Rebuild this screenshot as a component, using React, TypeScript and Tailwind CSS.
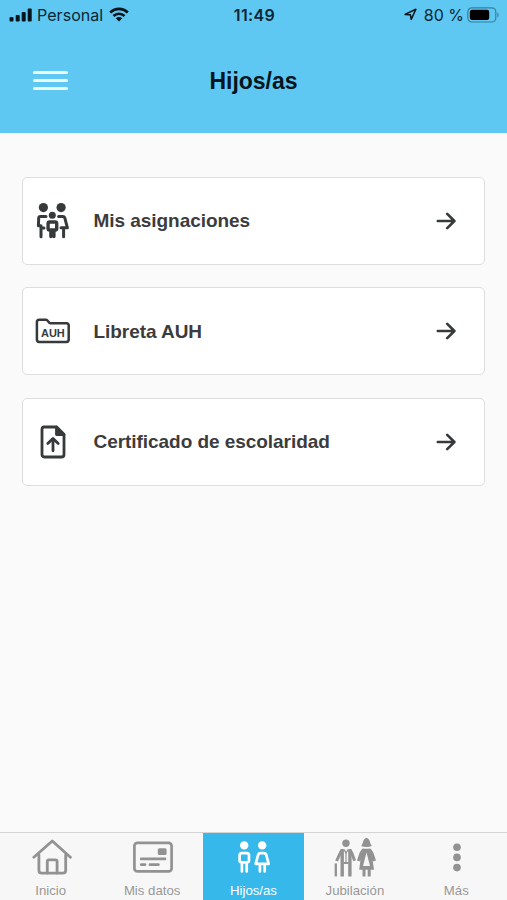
import type { ReactNode } from "react";
import clsx from "clsx";

function SignalIcon() {
  return (
    <svg width="24" height="14" viewBox="0 0 24 14" fill="#06141b">
      <rect x="0.5" y="9" width="4" height="4.5" rx="1" />
      <rect x="6.7" y="7" width="4" height="6.5" rx="1" />
      <rect x="12.7" y="4" width="4" height="9.5" rx="1" />
      <rect x="18.7" y="0.5" width="4" height="13" rx="1" />
    </svg>
  );
}

function WifiIcon() {
  return (
    <svg width="20" height="15" viewBox="0 0 20 15" fill="none" stroke="#06141b" strokeWidth="2.7">
      <path d="M1.2 5.4C6.2.8 13.8.8 18.8 5.4" />
      <path d="M4.5 8.9C7.7 6 12.3 6 15.5 8.9" />
      <path d="M10 14.5 6.8 11.2C8.6 9.6 11.4 9.6 13.2 11.2Z" fill="#06141b" stroke="none" />
    </svg>
  );
}

function LocationIcon() {
  return (
    <svg width="13" height="13" viewBox="0 0 13 13" fill="none" stroke="#06141b" strokeWidth="1.5" strokeLinejoin="round">
      <path d="M1 6.4 11.9 1.2 7.2 11.4 6.4 6.8Z" />
    </svg>
  );
}

function BatteryIcon() {
  return (
    <svg width="33" height="16" viewBox="0 0 33 16">
      <rect x="0.8" y="0.8" width="28" height="14.2" rx="4" fill="none" stroke="#3a7f9e" strokeWidth="1.2" />
      <rect x="2.8" y="2.8" width="19.4" height="10.2" rx="2.2" fill="#000" />
      <path d="M30.4 5.5c1.6.6 1.6 4.4 0 5Z" fill="#3a7f9e" />
    </svg>
  );
}

function FamilyIcon() {
  return (
    <svg width="34" height="37" viewBox="0 0 34 37" fill="none" stroke="#363a3b" strokeWidth="3" strokeLinecap="round" strokeLinejoin="round">
      <g fill="#363a3b" stroke="none">
        <circle cx="7.4" cy="5.6" r="4.6" />
        <circle cx="25.1" cy="5.6" r="4.6" />
        <circle cx="16.3" cy="13.2" r="3.5" />
      </g>
      <path d="M10 14.4H4.4Q2.8 14.4 2.7 16L2.4 23.8H5V34.8M5 26H8" />
      <path d="M22.6 14.4H26.8Q28.3 14.4 28.8 15.8L31.4 25.8H25M27.6 26V34.8" />
      <rect x="12.1" y="20" width="8.6" height="8" rx="1.5" strokeWidth="3.4" />
      <path d="M14.9 28.8V34.6M17.9 28.8V34.6" strokeWidth="3.4" />
    </svg>
  );
}

function FolderIcon() {
  return (
    <svg width="36" height="26" viewBox="0 0 36 26">
      <path
        d="M4.2 1.7H10.7Q11.7 1.7 12.4 2.5L14.2 4.6Q14.8 5.2 15.8 5.2H31.4Q33.7 5.2 33.7 7.5V21.6Q33.7 24 31.4 24H4.2Q1.9 24 1.9 21.6V4Q1.9 1.7 4.2 1.7Z"
        fill="none"
        stroke="#363a3b"
        strokeWidth="2.5"
      />
      <text x="17.9" y="18.6" textAnchor="middle" fontFamily="Liberation Sans, sans-serif" fontWeight="700" fontSize="11" fill="#363a3b">
        AUH
      </text>
    </svg>
  );
}

function UploadIcon() {
  return (
    <svg width="26" height="34" viewBox="0 0 26 34" fill="none" stroke="#363a3b" strokeWidth="2.8" strokeLinecap="round" strokeLinejoin="round">
      <path d="M4 2H16.5L24 9.5V29.5Q24 32 21.5 32H4.2Q2 32 2 29.5V4.2Q2 2 4 2Z" />
      <path d="M16.5 2V9.5H24Z" fill="#363a3b" />
      <path d="M13 25.8V14M7.8 18.6 13 13.4 18.2 18.6" />
    </svg>
  );
}

function ArrowIcon() {
  return (
    <svg width="20" height="18" viewBox="0 0 20 18" fill="none" stroke="#363a3b" strokeWidth="2.6" strokeLinecap="round" strokeLinejoin="round">
      <path d="M1.8 9H18.2M11.2 1.8 18.4 9 11.2 16.2" />
    </svg>
  );
}

function HomeIcon() {
  return (
    <svg width="42" height="40" viewBox="0 0 42 40" fill="none" stroke="#929292" strokeWidth="2.8" strokeLinecap="round" strokeLinejoin="round">
      <path d="M3.8 19.2 22.3 3 40.4 19.2" />
      <path d="M8.9 17V32.2Q8.9 35.2 11.9 35.2H32.7Q35.7 35.2 35.7 32.2V17" />
      <path d="M17.3 35V23.4Q17.3 21.8 18.9 21.8H25.5Q27.1 21.8 27.1 23.4V35" />
    </svg>
  );
}

function CardIcon() {
  return (
    <svg width="42" height="40" viewBox="0 0 42 40" fill="none" stroke="#929292" strokeWidth="2.7" strokeLinecap="round">
      <rect x="3.4" y="4.8" width="37.2" height="28.6" rx="3" />
      <path d="M10.2 20.9H34M10.2 26.7H14M19 26.7H27.4" />
      <rect x="26.8" y="10.2" width="8.8" height="6.8" rx="1.6" fill="#929292" stroke="none" />
    </svg>
  );
}

function KidsIcon() {
  return (
    <svg width="40" height="40" viewBox="0 0 40 40" fill="none" stroke="#fff" strokeWidth="2.7" strokeLinecap="round" strokeLinejoin="round">
      <circle cx="11.2" cy="7.4" r="4.2" fill="#fff" stroke="none" />
      <circle cx="29.2" cy="7.4" r="4.2" fill="#fff" stroke="none" />
      <path d="M8.9 33.4V24.4H8.2Q6.6 24.2 6.6 22.6V17.4Q6.6 15.1 8.9 15.1H13.7Q16 15.1 16 17.4V22.6Q16 24.2 14.4 24.4H13.7V33.4M8.9 24.4H13.7" />
      <path d="M26.9 33.4V25.8H22.7L25.1 17Q25.7 15.1 27.6 15.1H30.8Q32.7 15.1 33.3 17L35.7 25.8H31.7V33.4M26.9 25.8H31.7" />
    </svg>
  );
}

function SeniorsIcon() {
  return (
    <svg width="44" height="42" viewBox="0 0 44 42" fill="none" stroke="#929292" strokeWidth="3" strokeLinejoin="round">
      <g fill="#929292" stroke="none">
        <circle cx="13" cy="5.2" r="3.7" />
        <path d="M28 7.9Q29.2 7 29.9 4.6Q30.9 0 33.5 0Q36.1 0 37.1 4.6Q37.8 7 39 7.9Q33.5 9.9 28 7.9Z" />
      </g>
      <path d="M9.6 12.4Q8 13 7.2 15L3.6 23M16.4 12.4Q18 13 18.8 15L21.6 22.8" />
      <path d="M9.2 11V38.4M16.9 11V38.4" strokeWidth="3.4" />
      <path d="M11 11.5 13 15 15.2 11.5" strokeWidth="1.4" />
      <path d="M13 24V26" strokeWidth="5" />
      <path d="M13 15V24" strokeWidth="1.2" />
      <path d="M2.8 25.4V38.4" strokeWidth="2.3" />
      <path d="M31.4 12.2Q29.2 12.6 28.3 15L25.6 23M35.6 12.2Q37.8 12.6 38.7 15L41.4 23" strokeWidth="3.4" />
      <path
        d="M29 10.8H38L41 31.8H26.2ZM33.5 14.5 30 28H37Z"
        fill="#929292"
        fillRule="evenodd"
        stroke="none"
      />
      <path d="M31 31V38.4M36.2 31V38.4" />
    </svg>
  );
}

function DotsIcon() {
  return (
    <svg width="40" height="40" viewBox="0 0 40 40" fill="#929292">
      <circle cx="21" cy="9.2" r="3.8" />
      <circle cx="21" cy="19.4" r="3.8" />
      <circle cx="21" cy="29.6" r="3.8" />
    </svg>
  );
}

type Item = { label: string; icon: ReactNode };

const options: Item[] = [
  { label: "Mis asignaciones", icon: <FamilyIcon /> },
  { label: "Libreta AUH", icon: <FolderIcon /> },
  { label: "Certificado de escolaridad", icon: <UploadIcon /> },
];

const tabs: Item[] = [
  { label: "Inicio", icon: <HomeIcon /> },
  { label: "Mis datos", icon: <CardIcon /> },
  { label: "Hijos/as", icon: <KidsIcon /> },
  { label: "Jubilación", icon: <SeniorsIcon /> },
  { label: "Más", icon: <DotsIcon /> },
];

function StatusBar() {
  return (
    <div className="grid h-[29px] grid-cols-[1fr_auto_1fr] items-center pl-[9px] pr-[7px] font-[Inter,sans-serif] text-[16px] leading-none text-[#0b2634]">
      <div className="flex items-center">
        <SignalIcon />
        <span className="ml-1 mr-[6px] tracking-[0.05px]">Personal</span>
        <WifiIcon />
      </div>
      <span className="font-semibold tracking-[0.4px]">11:49</span>
      <div className="flex items-center justify-end">
        <LocationIcon />
        <span className="ml-[7px] mr-[3px]">80 %</span>
        <BatteryIcon />
      </div>
    </div>
  );
}

export default function App() {
  return (
    <div className="flex h-[900px] w-[507px] flex-col overflow-hidden bg-[#fafafa] font-['Liberation_Sans',Arial,sans-serif]">
      <header className="h-[133px] shrink-0 bg-[#5ec8f2]">
        <StatusBar />
        <div className="grid h-[102px] grid-cols-[1fr_auto_1fr] items-center px-[33px]">
          <button aria-label="Menú" className="flex w-[35px] flex-col gap-[5px]">
            <span className="h-[3px] rounded-full bg-[#e9fbff]" />
            <span className="h-[3px] rounded-full bg-[#e9fbff]" />
            <span className="h-[3px] rounded-full bg-[#e9fbff]" />
          </button>
          <h1 className="pt-[2px] text-[23px] font-bold text-[#06141b]">Hijos/as</h1>
        </div>
      </header>

      <main className="flex flex-1 flex-col gap-[22.5px] px-[22px] pt-[43.5px]">
        {options.map(({ label, icon }) => (
          <button
            key={label}
            className="flex h-[88px] items-center rounded-[5px] border border-[#dedede] bg-white pr-[28px] text-left"
          >
            <span className="flex w-[60px] justify-center">{icon}</span>
            <span className="ml-[10.5px] flex-1 pt-[2px] text-[19px] font-bold tracking-[-0.05px] text-[#3c3c3c]">{label}</span>
            <ArrowIcon />
          </button>
        ))}
      </main>

      <nav className="grid h-[68.5px] shrink-0 grid-cols-5 border-t-[1.5px] border-[#d4d4d4] bg-[#f7f7f7]">
        {tabs.map(({ label, icon }) => {
          const active = label === "Hijos/as";
          return (
            <button
              key={label}
              className={clsx(
                "flex flex-col items-center pt-[5px] text-[13.2px]",
                active ? "bg-[#37b8ea] text-white" : "text-[#979797]"
              )}
            >
              <span className="flex h-[42px] items-start">{icon}</span>
              <span className="leading-[22px]">{label}</span>
            </button>
          );
        })}
      </nav>
    </div>
  );
}
